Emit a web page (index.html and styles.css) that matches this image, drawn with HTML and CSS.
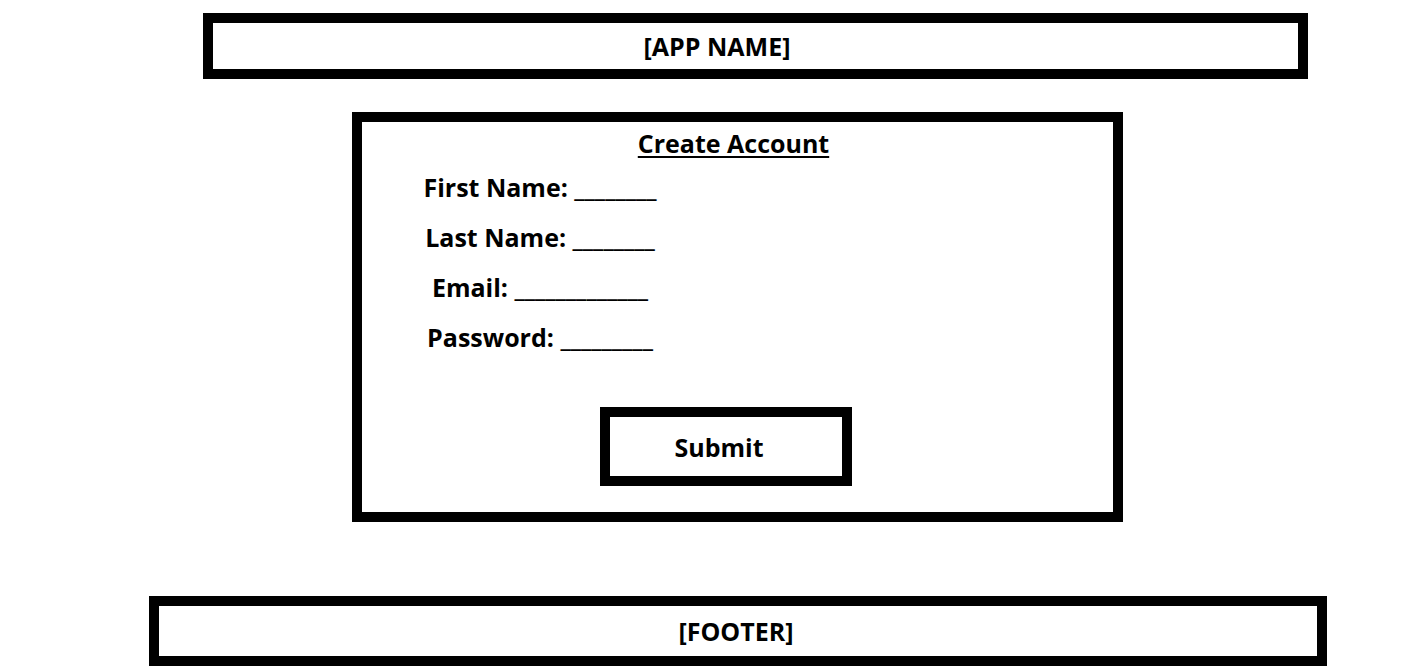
FILE: index.html
```html
<!DOCTYPE html>
<html>
<head>
<meta charset="utf-8">
<link rel="stylesheet" href="styles.css">
</head>
<body>
<div class="page">
  <header class="app-header">[APP NAME]</header>
  <main class="card">
    <h1 class="card-title">Create Account</h1>
    <div class="fields">
      <div class="field">First Name: ________</div>
      <div class="field">Last Name: ________</div>
      <div class="field">Email: _____________</div>
      <div class="field">Password: _________</div>
    </div>
    <div class="submit">Submit</div>
  </main>
  <footer class="app-footer">[FOOTER]</footer>
</div>
</body>
</html>
```

FILE: styles.css
```css
html, body {
  margin: 0;
  padding: 0;
  background: #fff;
}
body {
  font-family: "Open Sans", "Noto Sans", "Liberation Sans", sans-serif;
  font-weight: 700;
  font-size: 25px;
  line-height: 30px;
  color: #000;
}
.page {
  display: flex;
  flex-direction: column;
  align-items: flex-start;
  padding-top: 13px;
}
.app-header {
  box-sizing: border-box;
  margin-left: 203px;
  width: 1105px;
  height: 66px;
  border: 10px solid #000;
  display: flex;
  align-items: center;
  justify-content: center;
  padding-right: 77px;
}
.card {
  box-sizing: border-box;
  margin-top: 33px;
  margin-left: 352px;
  width: 771px;
  height: 410px;
  border: 10px solid #000;
  display: flex;
  flex-direction: column;
  align-items: flex-start;
  padding-top: 6px;
}
.card-title {
  align-self: stretch;
  margin: 0;
  font-size: 25px;
  font-weight: 700;
  text-align: center;
  text-decoration: underline;
  text-underline-offset: 3px;
  text-decoration-thickness: 2px;
  padding-right: 8px;
}
.fields {
  width: 356px;
  margin-top: 14px;
  display: flex;
  flex-direction: column;
  gap: 20px;
}
.field {
  text-align: center;
  white-space: nowrap;
}
.submit {
  box-sizing: border-box;
  margin-top: 55px;
  margin-left: 238px;
  width: 252px;
  height: 79px;
  border: 10px solid #000;
  display: flex;
  align-items: center;
  justify-content: center;
  padding-right: 14px;
}
.app-footer {
  box-sizing: border-box;
  margin-top: 74px;
  margin-left: 149px;
  width: 1178px;
  height: 70px;
  border: 10px solid #000;
  display: flex;
  align-items: center;
  justify-content: center;
  padding-right: 4px;
}
```
